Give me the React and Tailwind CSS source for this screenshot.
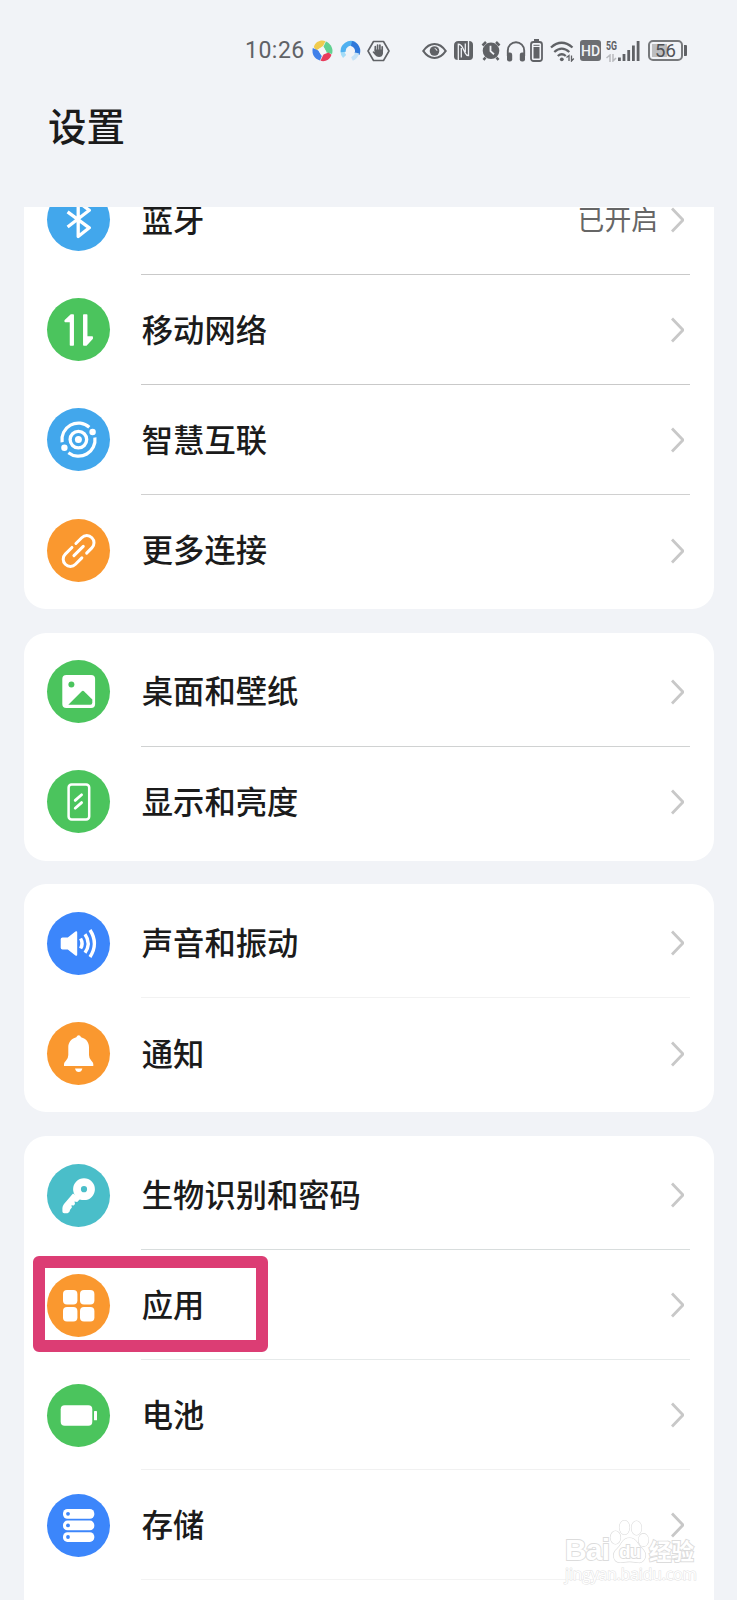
import React from 'react';

const icons = {
  bluetooth: (
    <path d="M20.600 23.800 42.300 39.800 31.200 48.500V14L42.300 22.300 20.600 39" fill="none" stroke="#fff" strokeWidth="3.300" strokeLinejoin="round" />
  ),
  mobile: (
    <g fill="#fff" stroke="#fff" strokeWidth="1.500" strokeLinejoin="round">
      <path d="M26.200 17v30h-2.700V23.400h-5.300v-.900l5.800-5.500z" />
      <path d="M36.800 17v30h2.400l6-6.600v-1.400h-5.500V17z" />
    </g>
  ),
  connect: (
    <g fill="none" stroke="#fff" strokeWidth="3.200">
      <circle cx="31.400" cy="31.600" r="3.500" fill="#fff" stroke="none" />
      <circle cx="31.400" cy="31.600" r="8.300" strokeWidth="3.300" />
      <path d="M15.100 34.200A16.500 16.500 0 0 1 42.300 19.200" />
      <path d="M47.900 29.500A16.500 16.500 0 0 1 21.400 44.700" />
      <circle cx="45.600" cy="24" r="3.200" fill="#fff" stroke="none" />
      <circle cx="17.400" cy="39.700" r="3.200" fill="#fff" stroke="none" />
    </g>
  ),
  link: (
    <g fill="none" stroke="#fff" strokeWidth="3" strokeLinecap="round" transform="translate(31.600 32) rotate(-45)">
      <path d="M3.400-7.200h8.200a7.200 7.200 0 0 1 0 14.400H4.200" />
      <path d="M-2.200-7.200h-9.400a7.200 7.200 0 0 0 0 14.400h9" />
      <path d="M-6.600 0H6.600" />
    </g>
  ),
  picture: (
    <g>
      <rect x="15.3" y="15" width="32.8" height="33" rx="4" fill="#fff" />
      <circle cx="24.4" cy="24.4" r="3" fill="#4bc45d" />
      <path d="M21.3 44.8 34.6 31.4q1.3-1.2 2.6 0l8.1 8.2v3.2q0 2-2 2z" fill="#4bc45d" />
    </g>
  ),
  display: (
    <g fill="none" stroke="#fff">
      <rect x="21.600" y="14.400" width="20.600" height="35.200" rx="3" strokeWidth="2.500" />
      <path d="m28.200 30.400 6.400-5.600M28.200 38.200l6.400-5.600" strokeWidth="2.800" strokeLinecap="round" />
    </g>
  ),
  sound: (
    <g fill="none" stroke="#fff" strokeWidth="3.400">
      <path d="M15.500 25.500h5.300l7.600-6q1.800-1 1.800.8v22.400q0 1.800-1.800.8l-7.600-6h-5.300q-1.800 0-1.800-1.800v-8.400q0-1.800 1.800-1.800z" fill="#fff" stroke="none" />
      <path d="M33.600 26.500q3 5 0 10M38 22.200q6.400 9.300 0 18.600M43 18q8.800 13.500 0 27" />
    </g>
  ),
  bell: (
    <g fill="#fff">
      <path d="M31.700 13.300q1.600 0 2.400 1.900C39.400 16.600 42 20.500 42 25.300v7.700q0 3.400 2.400 5.700Q46.300 40.500 46.300 42v2H17v-2q0-1.500 1.900-3.300 2.400-2.300 2.400-5.700v-7.700c0-4.800 2.700-8.700 8-10.100q.8-1.900 2.400-1.900z" />
      <path d="M28 46.500h7.400q-.9 3.500-3.700 3.500T28 46.500z" />
    </g>
  ),
  key: (
    <g>
      <path d="M26 29.500 17 40q-1.500 1.800-1.600 4v3.500q0 1.800 1.800 1.800h3.300q2.300-.6 2.600-3.600l1.800-2.200-.500-2.200 2.300.200 1.300-1.600-.5-2.300 2.700.300 3.300-3.400z" fill="#fff" />
      <circle cx="37" cy="25.200" r="7" fill="none" stroke="#fff" strokeWidth="7.800" />
    </g>
  ),
  apps: (
    <g fill="#fff">
      <rect x="16" y="16" width="14.400" height="14.400" rx="4" />
      <rect x="33" y="16" width="14.400" height="14.400" rx="4" />
      <rect x="16" y="33" width="14.400" height="14.400" rx="4" />
      <rect x="33" y="33" width="14.400" height="14.400" rx="4" />
    </g>
  ),
  battery: (
    <g fill="#fff">
      <rect x="13.700" y="21.200" width="31.600" height="20.600" rx="4" />
      <rect x="47" y="27" width="3" height="9.300" rx=".6" />
    </g>
  ),
  storage: (
    <g>
      {[15, 26.6, 38.2].map(y => (
        <g key={y}>
          <rect x="16" y={y} width="31.300" height="9.700" rx="4.400" fill="#fff" />
          <circle cx="21" cy={y + 4.8} r="1.900" fill="#3c86fb" />
        </g>
      ))}
    </g>
  ),
};

const groups = [
  [
    { label: '蓝牙', icon: 'bluetooth', bg: 'bg-[#42a7ec]', value: '已开启', line: 'bg-[#c9c9c9]' },
    { label: '移动网络', icon: 'mobile', bg: 'bg-[#4bc45d]', line: 'bg-[#c9c9c9]' },
    { label: '智慧互联', icon: 'connect', bg: 'bg-[#42a7ec]', line: 'bg-[#d0d0d0]' },
    { label: '更多连接', icon: 'link', bg: 'bg-[#fa982f]' },
  ],
  [
    { label: '桌面和壁纸', icon: 'picture', bg: 'bg-[#4bc45d]', line: 'bg-[#d0d2d2]' },
    { label: '显示和亮度', icon: 'display', bg: 'bg-[#4bc45d]' },
  ],
  [
    { label: '声音和振动', icon: 'sound', bg: 'bg-[#3c86fb]', line: 'bg-[#f2f2f2]' },
    { label: '通知', icon: 'bell', bg: 'bg-[#fa982f]' },
  ],
  [
    { label: '生物识别和密码', icon: 'key', bg: 'bg-[#4abec9]', line: 'bg-[#d8dddd]' },
    { label: '应用', icon: 'apps', bg: 'bg-[#fa982f]', line: 'bg-[#e6eaea]', marked: true },
    { label: '电池', icon: 'battery', bg: 'bg-[#4bc45d]', line: 'bg-[#f1f1f1]' },
    { label: '存储', icon: 'storage', bg: 'bg-[#3c86fb]', line: 'bg-[#f3f3f3]' },
  ],
];

const Row = ({ item }) => (
  <div className="relative h-[110.1px] flex items-center pl-[23.5px]">
    <div className={`w-[63px] h-[63px] shrink-0 rounded-full ${item.bg}`}>
      <svg width="63" height="63" viewBox="0 0 63 63">{icons[item.icon]}</svg>
    </div>
    <div className="ml-[31px] mr-[23.5px] h-full flex-1 flex flex-col">
      <div className="flex-1 flex items-center pl-[0.8px] pr-[5px]">
        <span className="flex-1 pb-[2px] text-[31.3px] leading-none font-medium text-[#1b1b1b]">{item.label}</span>
        {item.value && <span className="mr-[13px] text-[26.8px] leading-none text-[#666]">{item.value}</span>}
        <svg className="relative top-[0.5px]" width="14" height="26" viewBox="0 0 14 26" fill="none" stroke="#c8c8c8" strokeWidth="2.8" strokeLinejoin="bevel">
          <path d="m1 1.500 11 11.500L1 24.500" />
        </svg>
      </div>
      {item.line && <div className={`h-px ${item.line}`} />}
    </div>
    {item.marked && (
      <div className="absolute left-[9.5px] top-[6px] w-[235px] h-[96px] rounded-[6px] bg-transparent border-[12px] border-[#dc3d74]" />
    )}
  </div>
);

const StatusBar = () => (
  <div className="h-[101px] pl-[245px] flex items-center text-[#606266]">
    <span className="w-[67px] text-[23px] leading-none tracking-[0.5px] font-['Roboto']">10:26</span>
    {/* app notifications */}
    <svg width="21" height="22" viewBox="0 0 21 22">
      <path d="M1.800 7C3.500 1.500 9 -.500 13.500 1.200L10.500 7 4 10.500z" fill="#f0cb4e" />
      <path d="M14 1.500C19.500 4 21.500 9.500 20 14L14.500 12.500 11.500 6.500z" fill="#62d191" />
      <path d="M19.500 14.800C17.500 20.500 12.500 22 8.500 20.800L11.500 14.500 16.500 12.500z" fill="#e83c5c" />
      <path d="M8 20.500C2 19 -.500 13.500 .800 8l5.500 2.500 3.500 5.500z" fill="#4080ea" />
      <path d="m6 9.500 5-3.500 3.500 6-5 3.500z" fill="#f5f6f8" />
    </svg>
    <svg className="ml-[7px]" width="21" height="22" viewBox="0 0 21 22" fill="none">
      <path d="M4.600 16.500A7.800 7.800 0 0 1 4.500 6" stroke="#a5dcf7" strokeWidth="4.200" />
      <path d="M3.300 12A7.700 7.700 0 0 1 14.500 4.200" stroke="#4fb0f0" strokeWidth="5" />
      <path d="M11.500 3.500A7.600 7.600 0 0 1 17 14" stroke="#2f78da" strokeWidth="5.200" />
      <path d="M17.200 13q-1 4-5.200 6" stroke="#c5e2f7" strokeWidth="4" />
    </svg>
    <svg className="ml-[6px]" width="23" height="22" viewBox="0 0 23 22" fill="none" stroke="currentColor">
      <path d="M6.500 1.500h10L22 11l-5.500 9.500h-10L1 11z" strokeWidth="1.600" strokeLinejoin="round" />
      <path d="M8.300 11V6.500M10.600 10V5M12.900 10V5M15.200 11V6.800" strokeWidth="1.700" strokeLinecap="round" />
      <path d="M7.500 9.500h8.500v4q-.5 3.500-4 3.500-2.500 0-4-2l-2.500-3 .9-.8 1.600.8z" fill="currentColor" stroke="none" />
    </svg>
    <svg className="ml-[32px]" width="25" height="18" viewBox="0 0 25 18" fill="none" stroke="currentColor">
      <path d="M1.300 9Q6 2 12.500 2t11.200 7q-4.700 7-11.200 7T1.300 9z" strokeWidth="2.200" />
      <circle cx="12.500" cy="9" r="4.800" fill="currentColor" stroke="none" />
      <path d="M12.700 6.500q2 .2 2.300 2.300" stroke="#f1f3f7" strokeWidth="1" />
    </svg>
    <svg className="ml-[7px]" width="19" height="19" viewBox="0 0 19 19">
      <path d="M4.500 0H15q4 0 4 4v11q0 4-3.500 4H4q-4 0-4-3.500v-11Q0 0 4.500 0z" fill="currentColor" />
      <path d="M4.300 19V3.200q2.500 0 4.200 3.300l2.800 5.700q1 2.300 3.200 2.300V0M7.300 7v9.500M11.300 2.500V11" fill="none" stroke="#f1f3f7" strokeWidth="1.300" />
    </svg>
    <svg className="ml-[8px]" width="20" height="21" viewBox="0 0 20 21">
      <circle cx="10" cy="10.800" r="8.300" fill="currentColor" />
      <path d="M1.500 5.500 5 2M18.500 5.500 15 2M4.500 17.500l-2 2.300M15.500 17.500l2 2.300" stroke="currentColor" strokeWidth="2.600" />
      <path d="M9.500 5.800v5.400l3.500 3" fill="none" stroke="#f1f3f7" strokeWidth="1.800" />
    </svg>
    <svg className="ml-[5px]" width="20" height="22" viewBox="0 0 20 22" fill="none" stroke="currentColor">
      <path d="M1.800 16v-5.500a8.200 8.200 0 0 1 16.400 0V16" strokeWidth="1.900" />
      <rect x="1" y="12.500" width="5.200" height="9" rx="2.200" fill="currentColor" stroke="none" />
      <rect x="13.800" y="12.500" width="5.200" height="9" rx="2.200" fill="currentColor" stroke="none" />
    </svg>
    <svg className="ml-[4px]" width="13" height="23" viewBox="0 0 13 23">
      <rect x="4" width="5" height="2.500" fill="currentColor" />
      <rect x="1" y="3" width="11" height="19" rx="2.500" fill="none" stroke="currentColor" strokeWidth="1.800" />
      <rect x="3.500" y="8" width="6" height="11.500" fill="currentColor" />
      <path d="M3.500 6.300h6" stroke="currentColor" />
    </svg>
    <svg className="ml-[7px]" width="25" height="22" viewBox="0 0 25 22" fill="none" stroke="currentColor" strokeWidth="2.300">
      <path d="M1 7.500q10.500-9.500 21.500 0M4.300 12q7.500-6.800 15 0M7.800 16q4-3.500 8 0" />
      <circle cx="11.800" cy="19.300" r="1.900" fill="currentColor" stroke="none" />
      <path d="m16.500 17.500 2.500-2v5.500M21.500 15.500V21l2.300-2.500" strokeWidth="1.300" />
    </svg>
    <span className="ml-[5px] w-[21px] h-[21px] rounded-[3px] bg-[#6c6e72] flex items-center justify-center text-[14px] leading-none font-medium text-[#f1f3f7] font-['Roboto']">HD</span>
    <div className="ml-[5px] w-[12px] h-[22px] flex flex-col justify-between">
      <svg width="12" height="11" viewBox="0 0 12 11" fill="currentColor">
        <text x="0" y="9.500" textLength="11" lengthAdjust="spacingAndGlyphs" className="text-[12.500px] font-bold font-['Roboto']">5G</text>
      </svg>
      <svg width="11" height="8" viewBox="0 0 11 8" fill="none" stroke="#b9bbbf" strokeWidth="1.500">
        <path d="M.5 4 4 1v7M7 0v7l3-3" />
      </svg>
    </div>
    <svg width="22" height="22" viewBox="0 0 22 22" fill="currentColor">
      <rect y="17.500" width="2.800" height="3.500" />
      <rect x="4.600" y="14" width="2.800" height="7" />
      <rect x="9.300" y="10" width="2.800" height="11" />
      <rect x="14" y="5.500" width="2.800" height="15.500" />
      <rect x="18.700" y="1" width="2.800" height="20" />
    </svg>
    <div className="ml-[8px] w-[35px] h-[21px] rounded-[5px] border-2 border-[#77797c] p-[2px] flex">
      <span className="w-[15px] h-full bg-[#bcbdbf] text-[18.500px] leading-[14px] whitespace-nowrap font-['Roboto'] pl-[3px] text-[#505256]">56</span>
    </div>
    <div className="ml-px w-[3px] h-[11px] rounded-r-[1px] bg-[#606266]" />
  </div>
);

const Watermark = () => (
  <div className="absolute left-[565px] top-[1519px] w-[140px] text-white [paint-order:stroke_fill] [-webkit-text-stroke:1.800px_#dcdcdc]">
    <div className="flex items-end h-[46px] leading-none">
      <span className="w-[46px] h-[30px] text-[30px] font-bold font-['Liberation_Sans'] -tracking-[0.800px]">Bai</span>
      <span className="relative w-[38px] h-[46px]">
        <svg className="overflow-visible" width="38" height="46" viewBox="0 0 38 46" fill="#fff" stroke="#dcdcdc" strokeWidth="1.200">
          <ellipse cx="4.500" cy="18.500" rx="5" ry="6.500" />
          <ellipse cx="13.500" cy="8.500" rx="5" ry="7" />
          <ellipse cx="25.500" cy="9" rx="5" ry="7" />
          <ellipse cx="32.500" cy="21" rx="5" ry="6.300" />
          <path d="M10.500 24q3-5 8-5t8 5q1.500 2.500 4.500 5.500c7 6.500 2 14.500-3.500 14-9-1.200-9-1.200-18 0-7.500 0-9-9-3.500-13.500 2-2 3.500-4 4.500-6z" />
        </svg>
        <span className="absolute left-[8px] top-[23px] text-[19px] font-['Liberation_Sans'] font-bold -tracking-[1px]">du</span>
      </span>
      <span className="h-[26px] text-[22.500px] font-bold whitespace-nowrap">经验</span>
    </div>
    <div className="text-[15.500px] leading-[18px] whitespace-nowrap font-['Open_Sans'] [-webkit-text-stroke:1px_#e2e2e2]">jingyan.baidu.com</div>
  </div>
);

const App = () => (
  <div className="relative w-[737px] h-[1600px] overflow-hidden flex flex-col bg-[#f1f3f7] font-['Noto_Sans_CJK_SC',sans-serif]">
    <StatusBar />
    <header className="h-[106px] pl-[48px] pt-[4px]">
      <h1 className="text-[38.500px] leading-none font-medium text-[#1b1b1b]">设置</h1>
    </header>
    <main className="flex-1 min-h-0 overflow-hidden px-[23.500px]">
      {/* list is scrolled, so the first card starts above the header edge */}
      <div className="-mt-[46.300px] flex flex-col gap-[23.500px]">
        {groups.map((items, i) => (
          <section key={i} className="bg-white rounded-[22px] py-[4px]">
            {items.map(item => <Row key={item.label} item={item} />)}
            {i === groups.length - 1 && <div className="h-[60px]" />}
          </section>
        ))}
      </div>
    </main>
    <Watermark />
  </div>
);

export default App;
